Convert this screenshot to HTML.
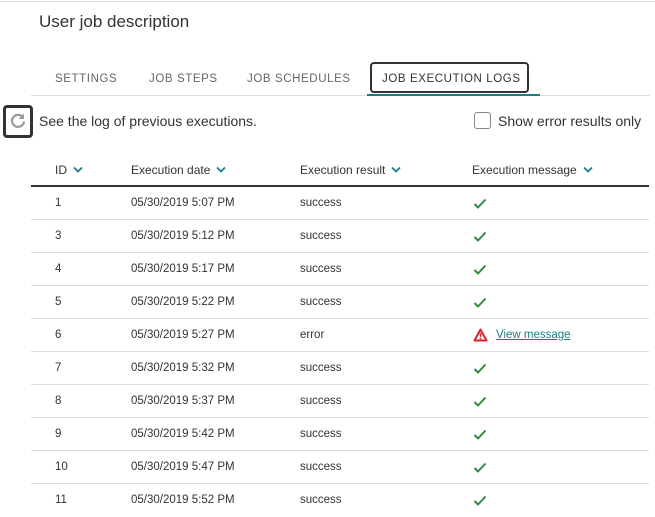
<!DOCTYPE html>
<html><head><style>
*{margin:0;padding:0;box-sizing:border-box}
body{width:655px;height:515px;background:#fff;font-family:"Liberation Sans",sans-serif;position:relative;overflow:hidden;color:#333}
.a{position:absolute;white-space:nowrap}
.tab{font-size:11.5px;letter-spacing:0.6px;color:#666;top:73px}
.h{font-size:12px;color:#333;top:163px}
.chev{display:inline-block;margin-left:6px;vertical-align:1px}
.row{position:absolute;left:31px;width:618px;height:33px;border-bottom:1px solid #ddd;font-size:11.5px;color:#333}
.row span{position:absolute;top:10px}
.ck{position:absolute;left:442px;top:11px}
</style></head><body>
<svg width="0" height="0" style="position:absolute"><defs>
<symbol id="c" viewBox="0 0 10 7"><path d="M1 1.5L5 5.5L9 1.5" fill="none" stroke="#1a7f7f" stroke-width="1.8"/></symbol>
<symbol id="k" viewBox="0 0 14 11"><path d="M1.5 6L5 9.5L12.5 1.5" fill="none" stroke="#2e8b3a" stroke-width="2"/></symbol>
</defs></svg>
<div class="a" style="left:0;top:1px;width:655px;height:1px;background:#ddd"></div>
<div class="a" style="left:39px;top:12px;font-size:17px;color:#333">User job description</div>
<div class="a tab" style="left:55px">SETTINGS</div>
<div class="a tab" style="left:149px">JOB STEPS</div>
<div class="a tab" style="left:247px">JOB SCHEDULES</div>
<div class="a tab" style="left:382px;color:#333">JOB EXECUTION LOGS</div>
<div class="a" style="left:370px;top:62px;width:159px;height:31px;border:2px solid #333;border-radius:4px"></div>
<div class="a" style="left:31px;top:95px;width:619px;height:1px;background:#ddd"></div>
<div class="a" style="left:367px;top:94px;width:173px;height:2px;background:#1a7f7f"></div>
<div class="a" style="left:3px;top:105px;width:30px;height:33px;border:3px solid #333;border-radius:4px"></div>
<svg class="a" style="left:9px;top:112px" width="18" height="18" viewBox="0 0 18 18"><path d="M14 5.5A6 6 0 1 0 15 9.5" fill="none" stroke="#999" stroke-width="2.2"/><path d="M15 1.5V7H9.5Z" fill="#999"/></svg>
<div class="a" style="left:39px;top:113px;font-size:14px;color:#333">See the log of previous executions.</div>
<div class="a" style="left:474px;top:112px;width:17px;height:17px;border:1px solid #888;border-radius:3px"></div>
<div class="a" style="left:498px;top:113px;font-size:14px;color:#333">Show error results only</div>
<div class="a h" style="left:55px">ID<svg class="chev" width="10" height="7"><use href="#c"/></svg></div>
<div class="a h" style="left:131px">Execution date<svg class="chev" width="10" height="7"><use href="#c"/></svg></div>
<div class="a h" style="left:300px">Execution result<svg class="chev" width="10" height="7"><use href="#c"/></svg></div>
<div class="a h" style="left:472px">Execution message<svg class="chev" width="10" height="7"><use href="#c"/></svg></div>
<div class="a" style="left:31px;top:185px;width:618px;height:2px;background:#333"></div>
<div class="row" style="top:187px"><span style="left:24px">1</span><span style="left:100px">05/30/2019 5:07 PM</span><span style="left:269px">success</span><svg class="ck" width="14" height="11"><use href="#k"/></svg></div>
<div class="row" style="top:220px"><span style="left:24px">3</span><span style="left:100px">05/30/2019 5:12 PM</span><span style="left:269px">success</span><svg class="ck" width="14" height="11"><use href="#k"/></svg></div>
<div class="row" style="top:253px"><span style="left:24px">4</span><span style="left:100px">05/30/2019 5:17 PM</span><span style="left:269px">success</span><svg class="ck" width="14" height="11"><use href="#k"/></svg></div>
<div class="row" style="top:286px"><span style="left:24px">5</span><span style="left:100px">05/30/2019 5:22 PM</span><span style="left:269px">success</span><svg class="ck" width="14" height="11"><use href="#k"/></svg></div>
<div class="row" style="top:319px"><span style="left:24px">6</span><span style="left:100px">05/30/2019 5:27 PM</span><span style="left:269px">error</span>
<svg style="position:absolute;left:442px;top:9px" width="15" height="14" viewBox="0 0 15 14"><path d="M7.5 1.5L13.5 12.5H1.5Z" fill="none" stroke="#d9262e" stroke-width="2" stroke-linejoin="round"/><rect x="6.7" y="5" width="1.6" height="4" fill="#d9262e"/><rect x="6.7" y="9.8" width="1.6" height="1.5" fill="#d9262e"/></svg>
<span style="left:465px;color:#1a7f7f;text-decoration:underline">View message</span></div>
<div class="row" style="top:352px"><span style="left:24px">7</span><span style="left:100px">05/30/2019 5:32 PM</span><span style="left:269px">success</span><svg class="ck" width="14" height="11"><use href="#k"/></svg></div>
<div class="row" style="top:385px"><span style="left:24px">8</span><span style="left:100px">05/30/2019 5:37 PM</span><span style="left:269px">success</span><svg class="ck" width="14" height="11"><use href="#k"/></svg></div>
<div class="row" style="top:418px"><span style="left:24px">9</span><span style="left:100px">05/30/2019 5:42 PM</span><span style="left:269px">success</span><svg class="ck" width="14" height="11"><use href="#k"/></svg></div>
<div class="row" style="top:451px"><span style="left:24px">10</span><span style="left:100px">05/30/2019 5:47 PM</span><span style="left:269px">success</span><svg class="ck" width="14" height="11"><use href="#k"/></svg></div>
<div class="row" style="top:484px;border-bottom:none"><span style="left:24px">11</span><span style="left:100px">05/30/2019 5:52 PM</span><span style="left:269px">success</span><svg class="ck" width="14" height="11"><use href="#k"/></svg></div>
</body></html>
